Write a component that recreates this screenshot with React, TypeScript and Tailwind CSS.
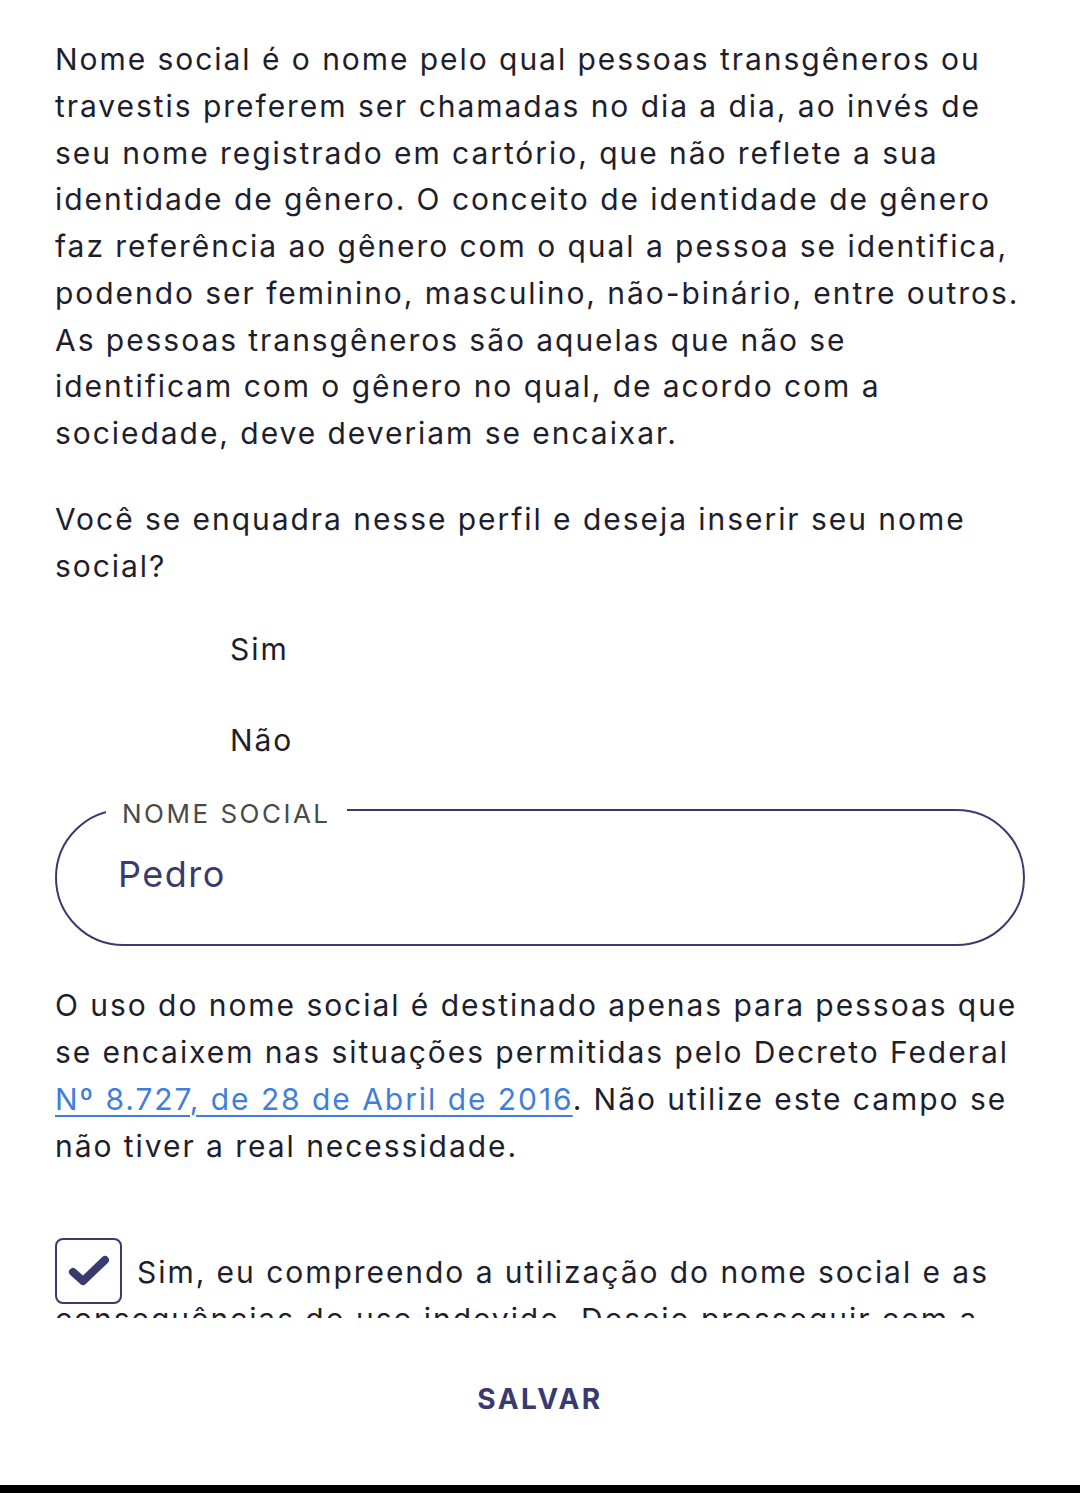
import React from 'react';

const FONT = { fontFamily: 'Inter, "Noto Sans", sans-serif' };

const INTRO = [
  'Nome social é o nome pelo qual pessoas transgêneros ou',
  'travestis preferem ser chamadas no dia a dia, ao invés de',
  'seu nome registrado em cartório, que não reflete a sua',
  'identidade de gênero. O conceito de identidade de gênero',
  'faz referência ao gênero com o qual a pessoa se identifica,',
  'podendo ser feminino, masculino, não-binário, entre outros.',
  'As pessoas transgêneros são aquelas que não se',
  'identificam com o gênero no qual, de acordo com a',
  'sociedade, deve deveriam se encaixar.',
];

function Lines({ lines }: { lines: string[] }) {
  return (
    <>
      {lines.map((l) => (
        <span key={l} className="block whitespace-nowrap">
          {l}
        </span>
      ))}
    </>
  );
}

export default function App() {
  return (
    <div
      className="w-[1080px] h-[1493px] flex flex-col bg-white text-[#1e1e2d] text-[30px] leading-[46.75px] tracking-[1.95px]"
      style={FONT}
    >
      {/* conteúdo rolável */}
      <div className="h-[1318px] overflow-hidden px-[55px] pt-[36px]">
        <p>
          <Lines lines={INTRO} />
        </p>

        <p className="mt-[39px]">
          <Lines lines={['Você se enquadra nesse perfil e deseja inserir seu nome', 'social?']} />
        </p>

        {/* opções */}
        <div className="mt-[15px] flex flex-col">
          {['Sim', 'Não'].map((opt) => (
            <label key={opt} className="h-[91px] flex items-center pl-[175px]">
              <input type="radio" name="social" className="sr-only" />
              <span>{opt}</span>
            </label>
          ))}
        </div>

        {/* campo nome social */}
        <fieldset className="mt-[9px] h-[151px] border-2 border-[#393a70] rounded-[70px] pl-[49px] pr-8">
          <legend className="px-[16px] text-[26px] leading-[20px] text-[#4a4a4a] tracking-[2.5px] pt-[9px]">
            NOME SOCIAL
          </legend>
          <div className="ml-[12px] mt-[28px] text-[36px] leading-[44px] text-[#393a70] tracking-[1.5px]">Pedro</div>
        </fieldset>

        <p className="mt-[36px]">
          <span className="block whitespace-nowrap">O uso do nome social é destinado apenas para pessoas que</span>
          <span className="block whitespace-nowrap">se encaixem nas situações permitidas pelo Decreto Federal</span>
          <span className="block whitespace-nowrap">
            <a href="#" className="text-[#3f7fd9] underline underline-offset-[5px] decoration-2">
              Nº 8.727, de 28 de Abril de 2016
            </a>
            . Não utilize este campo se
          </span>
          <span className="block whitespace-nowrap">não tiver a real necessidade.</span>
        </p>

        {/* aceite */}
        <p className="mt-[80px]">
          <span className="inline-flex align-top items-center justify-center w-[67px] h-[66px] -mt-[11px] -mb-[9px] mr-[15px] border-2 border-[#393a70] rounded-[8px] bg-white">
            <svg width="42" height="34" viewBox="0 0 42 34" fill="none">
              <path
                d="M5 18l10 9L37 6"
                stroke="#393a70"
                strokeWidth="8"
                strokeLinecap="round"
                strokeLinejoin="round"
              />
            </svg>
          </span>
          <span className="whitespace-nowrap">Sim, eu compreendo a utilização do nome social e as</span>
          <br />
          <span className="whitespace-nowrap">consequências do uso indevido. Desejo prosseguir com a</span>
        </p>
      </div>

      {/* rodapé */}
      <div className="flex-1 flex items-center justify-center pb-[4px]">
        <button className="text-[28px] font-bold tracking-[2.5px] text-[#393a70]">SALVAR</button>
      </div>
      <div className="h-[8px] bg-black" />
    </div>
  );
}
